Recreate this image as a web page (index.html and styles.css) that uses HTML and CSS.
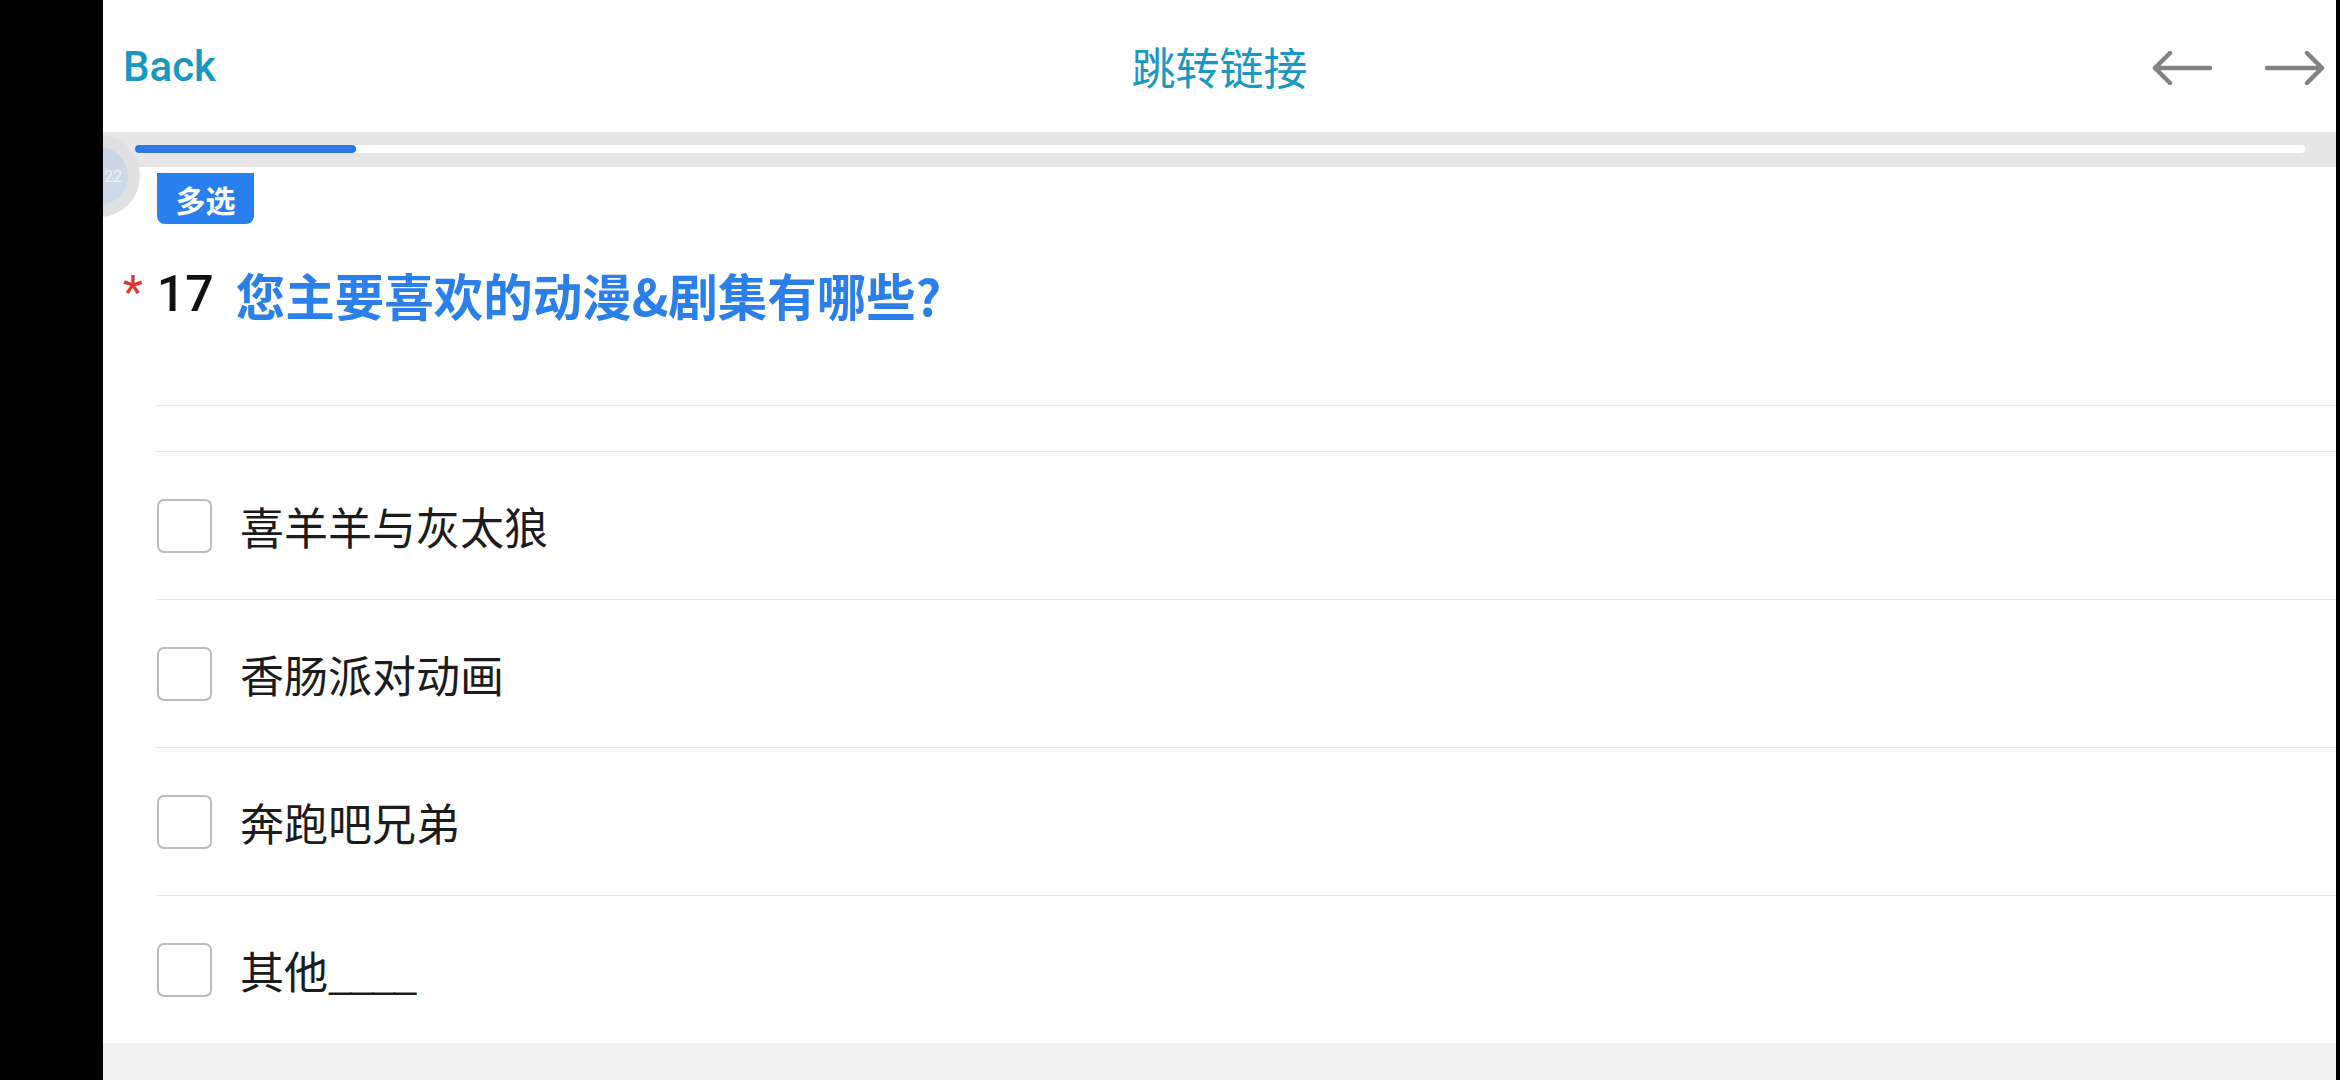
FILE: index.html
```html
<!DOCTYPE html>
<html lang="zh-CN">
<head>
<meta charset="utf-8">
<title>跳转链接</title>
<link rel="stylesheet" href="styles.css">
</head>
<body>
<div class="page">
  <header class="topbar">
    <a class="back">Back</a>
    <div class="title">跳转链接</div>
    <div class="navs">
      <svg class="arrow" viewBox="0 0 62 34" width="62" height="34"><path d="M59 17H4M19 2L4 17L19 32" fill="none" stroke="#828282" stroke-width="4.5" stroke-linecap="round" stroke-linejoin="round"/></svg>
      <svg class="arrow" viewBox="0 0 62 34" width="62" height="34"><path d="M3 17H58M43 2L58 17L43 32" fill="none" stroke="#828282" stroke-width="4.5" stroke-linecap="round" stroke-linejoin="round"/></svg>
    </div>
  </header>
  <div class="progress">
    <div class="track"><div class="fill" style="width:221px"></div></div>
  </div>
  <main class="content">
    <span class="badge">多选</span>
    <h2 class="question"><span class="req">*</span><span class="num">17</span><span class="qtext">您主要喜欢的动漫&amp;剧集有哪些?</span></h2>
    <div class="divider"></div>
    <ul class="options">
      <li class="option"><span class="box"></span><span class="label">喜羊羊与灰太狼</span></li>
      <li class="option"><span class="box"></span><span class="label">香肠派对动画</span></li>
      <li class="option"><span class="box"></span><span class="label">奔跑吧兄弟</span></li>
      <li class="option"><span class="box"></span><span class="label">其他<span class="blank">____</span></span></li>
    </ul>
  </main>
  <div class="footer-gap"></div>
  <div class="float-btn"><span>22</span></div>
</div>
</body>
</html>
```
FILE: styles.css
```css
html, body {
  margin: 0;
  padding: 0;
  height: 100%;
  background: #000;
}
body {
  font-family: Roboto, "Noto Sans CJK SC", sans-serif;
  overflow: hidden;
}
.page {
  position: relative;
  margin-left: 103px;
  width: 2233px;
  height: 1080px;
  background: #f2f2f2;
  overflow: hidden;
  display: flex;
  flex-direction: column;
}
.topbar {
  height: 132px;
  background: #fff;
  display: grid;
  grid-template-columns: 1fr auto 1fr;
  align-items: center;
  padding: 0 10px;
}
.back {
  margin-left: 10px;
  font-family: Roboto, sans-serif;
  font-weight: 500;
  font-size: 42px;
  color: #1798c2;
}
.title {
  font-family: "Noto Sans CJK SC", sans-serif;
  font-size: 44px;
  color: #1a98c4;
}
.navs {
  justify-self: end;
  display: flex;
  align-items: center;
  gap: 51px;
  padding-top: 4px;
}
.arrow { display: block; }
.progress {
  height: 35px;
  box-sizing: border-box;
  background: #e6e6e6;
  padding: 13px 31px 0 32px;
}
.track {
  height: 8px;
  background: #fff;
  border-radius: 4px;
}
.fill {
  height: 8px;
  background: #2b78e4;
  border-radius: 4px;
}
.content {
  background: #fff;
  padding-left: 54px;
  display: flex;
  flex-direction: column;
  align-items: flex-start;
}
.badge {
  margin-top: 6px;
  height: 51px;
  width: 97px;
  display: flex;
  align-items: center;
  justify-content: center;
  background: #2a7fee;
  color: #fff;
  font-family: "Noto Sans CJK SC", sans-serif;
  font-weight: 700;
  font-size: 30px;
  border-radius: 0 0 8px 8px;
}
.question {
  margin: 40px 0 0 -34px;
  height: 60px;
  display: flex;
  align-items: center;
  font-weight: 400;
  white-space: nowrap;
}
.req {
  font-family: Roboto, sans-serif;
  color: #d93a2e;
  font-size: 46px;
  margin-right: 14px;
  position: relative;
  top: -2px;
}
.num {
  font-family: Roboto, sans-serif;
  font-weight: 500;
  font-size: 50px;
  color: #111;
  margin-right: 22px;
}
.qtext {
  font-family: "Noto Sans CJK SC", sans-serif;
  font-weight: 700;
  font-size: 49.5px;
  color: #2b7fea;
}
.divider {
  margin-top: 81px;
  align-self: stretch;
  height: 46px;
  border-top: 1px solid #e8e8e8;
  box-sizing: border-box;
}
.options {
  list-style: none;
  margin: 0;
  padding: 0;
  align-self: stretch;
}
.option {
  height: 148px;
  box-sizing: border-box;
  border-top: 1px solid #e8e8e8;
  display: flex;
  align-items: center;
}
.box {
  width: 55px;
  height: 54px;
  box-sizing: border-box;
  border: 2px solid #bcbcbc;
  border-radius: 7px;
  background: #fff;
  margin-right: 28px;
  flex: none;
}
.label {
  font-family: "Noto Sans CJK SC", sans-serif;
  font-size: 44px;
  color: #1c1c1c;
}
.blank {
  letter-spacing: -3px;
}
.footer-gap {
  flex: 1;
  background: #f2f2f2;
}
.float-btn {
  position: absolute;
  left: -45px;
  top: 135px;
  width: 82px;
  height: 82px;
  box-sizing: border-box;
  border-radius: 50%;
  border: 12px solid rgba(226, 226, 226, 0.85);
  background: rgba(196, 210, 226, 0.85);
  display: flex;
  align-items: center;
  justify-content: flex-end;
  padding-right: 6px;
  font-family: Roboto, sans-serif;
  font-size: 16px;
  color: rgba(255, 255, 255, 0.7);
}
```
